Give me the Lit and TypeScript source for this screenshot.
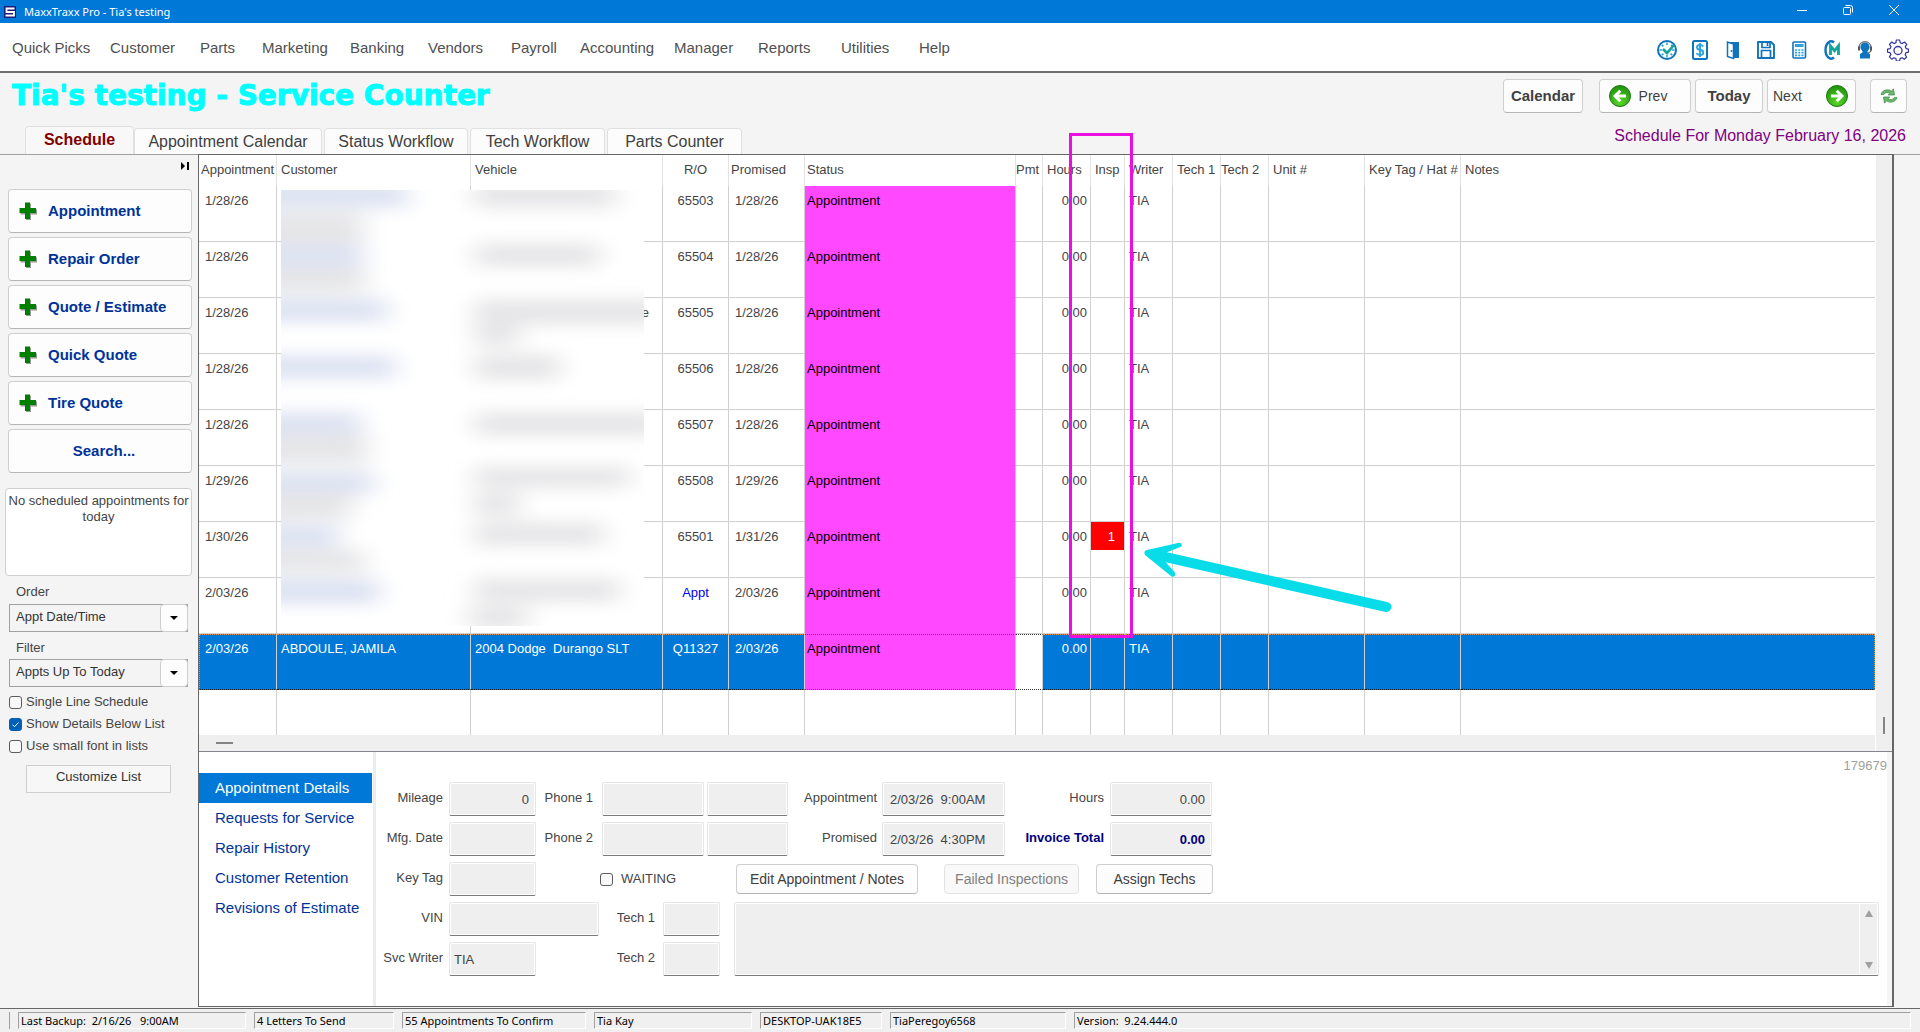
import { LitElement, html, css, svg, nothing } from "lit";
import { customElement } from "lit/decorators.js";
import { classMap } from "lit/directives/class-map.js";

interface Column { label: string; width: string; cls?: string; }
interface Row {
  appt: string; customer?: string; vehicle?: string; ro: string; promised: string;
  status: string; hours: string; insp?: string; writer: string; selected?: boolean; link?: boolean;
}

const COLUMNS: Column[] = [
  { label: "Appointment", width: "78px", cls: "tight" },
  { label: "Customer", width: "194px" },
  { label: "Vehicle", width: "192px" },
  { label: "R/O", width: "66px", cls: "center" },
  { label: "Promised", width: "76px", cls: "tight" },
  { label: "Status", width: "211px", cls: "tight" },
  { label: "Pmt", width: "27px", cls: "flush" },
  { label: "Hours", width: "48px" },
  { label: "Insp", width: "34px" },
  { label: "Writer", width: "48px" },
  { label: "Tech 1", width: "48px" },
  { label: "Tech 2", width: "48px", cls: "flush" },
  { label: "Unit #", width: "96px" },
  { label: "Key Tag / Hat #", width: "96px" },
  { label: "Notes", width: "auto" },
];

const row = (appt: string, ro: string, promised = appt, extra: Partial<Row> = {}): Row => ({
  appt, ro, promised, status: "Appointment", hours: "0.00", writer: "TIA", ...extra,
});

const ROWS: Row[] = [
  row("1/28/26", "65503"),
  row("1/28/26", "65504"),
  row("1/28/26", "65505", "1/28/26", { vehicle: "e" }),
  row("1/28/26", "65506"),
  row("1/28/26", "65507"),
  row("1/29/26", "65508"),
  row("1/30/26", "65501", "1/31/26", { insp: "1" }),
  row("2/03/26", "Appt", "2/03/26", { link: true }),
  row("2/03/26", "Q11327", "2/03/26", {
    customer: "ABDOULE, JAMILA", vehicle: "2004 Dodge  Durango SLT", selected: true,
  }),
];

const MENU = ["Quick Picks", "Customer", "Parts", "Marketing", "Banking", "Vendors", "Payroll", "Accounting", "Manager", "Reports", "Utilities", "Help"];
const TABS = ["Schedule", "Appointment Calendar", "Status Workflow", "Tech Workflow", "Parts Counter"];
const ACTIONS = ["Appointment", "Repair Order", "Quote / Estimate", "Quick Quote", "Tire Quote"];
const SECTIONS = ["Appointment Details", "Requests for Service", "Repair History", "Customer Retention", "Revisions of Estimate"];

/* x, y, width, height of the hidden names and vehicles */
const BLUE_BARS = [[0, -8, 126, 26], [0, 54, 82, 26], [0, 108, 106, 24], [0, 165, 114, 24], [0, 222, 80, 24], [0, 281, 92, 24], [0, 334, 58, 24], [0, 388, 98, 26]];
const GREY_BARS = [
  [0, 22, 82, 32], [0, 78, 84, 24], [0, 244, 86, 30], [0, 303, 70, 26], [0, 360, 84, 22],
  [194, -8, 140, 26], [194, 53, 124, 24], [194, 109, 190, 26], [194, 134, 44, 22], [194, 164, 84, 26],
  [194, 222, 190, 24], [194, 276, 154, 22], [194, 302, 44, 24], [194, 332, 128, 24], [194, 388, 144, 24], [188, 416, 58, 24],
];

const toolbarIcons = [
  { label: "Time clock", art: svg`<ellipse cx="11" cy="11" rx="9" ry="9" fill="#fff" stroke="#0f73bd" stroke-width="2"/><g stroke="#2ba3e0" stroke-width="1.5"><path d="M11 3.500v2.500M11 16v2.500M3.500 11H6M16 11h2.500M5.700 5.700l1.700 1.700M5.700 16.300l1.700-1.700M16.300 16.300l-1.700-1.700M16.300 5.700l-1.300 1.300"/></g><path d="M7 10l4 4 7-8" fill="none" stroke="#12a39a" stroke-width="2.600"/>` },
  { label: "Payments", art: svg`<rect x="4" y="2" width="14" height="18" rx="1.500" fill="#fff" stroke="#0f73bd" stroke-width="2"/><path d="M14.300 7.500c-1-1.200-2-1.500-3.300-1.500-4 0-4 4.300 0 4.800 4.300.6 4.300 5.200 0 5.200-1.500 0-2.700-.5-3.500-1.700M11 4v14" fill="none" stroke="#2ba3e0" stroke-width="1.900"/>` },
  { label: "Exit", art: svg`<path d="M5 3h12v16H9" fill="#0f73bd"/><path d="M5.500 3v14.500l6 2V5z" fill="#fff" stroke="#0f73bd" stroke-width="1.500"/><circle cx="9.500" cy="12" r="1" fill="#0f73bd"/>` },
  { label: "Save", art: svg`<path d="M3 3h13l3 3v13H3z" fill="#fff" stroke="#0f73bd" stroke-width="1.900" stroke-linejoin="round"/><path d="M7 3v5.500h8V3M12.500 3.500v3.500M6.500 19v-7.500h9V19" fill="none" stroke="#0f73bd" stroke-width="1.700"/>` },
  { label: "Calculator", art: svg`<rect x="5" y="3" width="12.500" height="16" rx="1" fill="#fff" stroke="#0f73bd" stroke-width="1.600"/><path d="M7 6.500h8.500" stroke="#2ba3e0" stroke-width="3"/><path d="M7 11h8.500M7 13.700h8.500M7 16.300h8.500" stroke="#2ba3e0" stroke-width="1.700" stroke-dasharray="2 1.250"/>` },
  { label: "CM", art: svg`<path d="M13 3.500C9.500.5 4.500 4 4.500 11s5 10.500 8.500 7.500" fill="none" stroke="#0f73bd" stroke-width="2.400"/><path d="M9.500 16V6.800l4 5 4-5V16" fill="none" stroke="#12a39a" stroke-width="2.800"/>` },
  { label: "Support", art: svg`<circle cx="11" cy="8" r="4.600" fill="#0f73bd"/><path d="M8.500 11h5v2.500l2.500 1.500v4.500H6V15l2.500-1.500z" fill="#0f73bd"/><path d="M5 11V8.500C5 .8 17 .8 17 8.500V11c0 2-1.500 2.500-3.500 2.500" fill="none" stroke="#777" stroke-width="1.300"/><path d="M5 7.500v4M17 7.500v4" stroke="#555" stroke-width="2"/>` },
  { label: "Settings", art: svg`<path d="M9.300 1h3.400l.5 2.700 2 .9 2.300-1.600 2.300 2.400-1.500 2.300.8 1.900 2.400.5v3l-2.500.6-.9 2 1.500 2.300-2.300 2.300-2.200-1.600-2 .9-.5 2.500H9.400l-.5-2.600-1.900-.8-2.300 1.500-2.300-2.300L3.900 15.600l-.8-1.900-2.600-.5v-3l2.700-.6.8-2-1.500-2.200 2.200-2.400L7 4.600l1.900-.8z" fill="#fff" stroke="#3434a4" stroke-width="1.200" stroke-linejoin="round"/><circle cx="11" cy="11.500" r="4" fill="none" stroke="#3434a4" stroke-width="1.300"/>` },
];

const roundArrow = (left: boolean) => html`<svg class="round" viewBox="0 0 22 22" aria-hidden="true">
  <defs><radialGradient id="g" cx="50%" cy="80%" r="80%"><stop offset="0" stop-color="#5ad626"/><stop offset="1" stop-color="#1f8f10"/></radialGradient></defs>
  <circle cx="11" cy="11" r="10.500" fill="url(#g)" stroke="#16780c"/>
  <path d="${left ? "M17 11H6.500M11.300 5.800L6 11l5.300 5.200" : "M5 11h10.500M10.700 5.800L16 11l-5.300 5.200"}" fill="none" stroke="#fff" stroke-width="2.900"/>
</svg>`;

@customElement("app-root")
export class AppRoot extends LitElement {
  static styles = css`
    :host { display: flex; flex-direction: column; min-height: 100vh; background: #f4f4f4; color: #444; font: 13px/16px "Liberation Sans", Arial, sans-serif; }
    *, *::before, *::after { box-sizing: border-box; }
    button, input, select, textarea { font: inherit; color: inherit; margin: 0; }
    a { text-decoration: none; color: inherit; }
    svg { display: block; flex: none; }

    .titlebar { display: flex; align-items: center; height: 23px; background: #0078d7; color: #fff; padding: 0 8px 0 4px; gap: 8px; font: 11px/16px "Noto Sans", "Open Sans", sans-serif; }
    .titlebar .name { flex: 1; padding-top: 1px; }
    .window { display: flex; gap: 10px; padding-bottom: 3px; }
    .window button { width: 36px; height: 20px; padding: 0; border: 0; background: none; display: grid; place-items: center; }

    .menubar { display: flex; justify-content: space-between; align-items: center; height: 50px; padding: 0 11px 0 12px; background: #fff; border-bottom: 2px solid #6e6e6e; }
    .menu { display: grid; grid-template-columns: 98px 90px 62px 88px 78px 83px 69px 94px 84px 83px 78px 60px; padding-top: 2px; font-size: 15px; line-height: 20px; color: #505050; }
    .tools { display: flex; gap: 11px; padding-top: 5px; }
    .tools button { width: 22px; height: 22px; padding: 0; border: 0; background: none; }
    .tools svg { width: 22px; height: 22px; }

    .head { display: flex; justify-content: space-between; padding: 6px 13px 0 12px; }
    h1 { margin: 0; font: 700 28px/34px "DejaVu Sans", "Liberation Sans", sans-serif; color: #00ffff; -webkit-text-stroke: 1px #00ffff; }
    .push { background: #fdfdfd; border: 1px solid #cfcfcf; border-bottom-color: #b5b5b5; border-radius: 4px; padding: 0; display: flex; align-items: center; justify-content: center; height: 34px; font-size: 14px; color: #404040; }
    .push.strong { font-weight: 700; font-size: 15px; }
    .nav { display: flex; gap: 4px; }
    .calendar { width: 80px; margin-right: 12px; }
    .prev { width: 92px; gap: 8px; padding-right: 14px; }
    .today { width: 68px; }
    .next { width: 89px; justify-content: space-between; padding: 0 7px 0 5px; }
    .refresh { width: 37px; margin-left: 10px; }
    .round { width: 22px; height: 22px; }

    .tabrow { display: flex; justify-content: space-between; align-items: flex-end; height: 41px; padding: 0 14px 0 25px; }
    .tabs { display: flex; align-items: flex-end; gap: 2px; }
    .tab { height: 26px; padding: 0; border: 1px solid #e0e0e0; border-bottom: 0; border-radius: 4px 4px 0 0; background: #fcfcfc; font-size: 16px; line-height: 24px; color: #404040; width: 135px; }
    .tab:nth-child(2) { width: 188px; margin-left: -2px; }
    .tab:nth-child(3) { width: 144px; }
    .tab.on { width: 109px; height: 28px; padding-bottom: 2px; font-weight: 700; color: #800000; background: #f8f8f8; }
    .date { font-size: 16px; line-height: 20px; color: #800080; padding-bottom: 8px; }

    .body { flex: 1; display: flex; padding-right: 26px; border-top: 1px solid #a0a0a0; }
    aside { width: 198px; flex: none; display: flex; flex-direction: column; padding: 7px 6px 0 8px; }
    .collapse { align-self: flex-end; width: 12px; height: 8px; margin: 0 0 19px; padding: 0; border: 0; background: none; }
    .actions { display: flex; flex-direction: column; gap: 4px; }
    .actions .push { height: 44px; font-weight: 700; font-size: 15px; color: #003399; justify-content: flex-start; padding-left: 10px; gap: 11px; }
    .actions .search { justify-content: center; padding-left: 8px; }
    .notice { height: 88px; margin: 15px 0 0 -3px; padding: 4px 0; background: #fff; border: 1px solid #cfcfcf; border-radius: 4px; text-align: center; }
    .picker { display: flex; flex-direction: column; gap: 4px; margin: 8px 4px 0 1px; }
    .picker label { padding-left: 7px; }
    .pick { display: flex; position: relative; }
    .pick select { appearance: none; flex: 1; height: 28px; padding: 0 32px 3px 6px; border: 1px solid #a0a0a0; border-radius: 0; background: #f4f4f4; color: #333; }
    .pick span { position: absolute; right: 0; top: 0; width: 28px; height: 28px; background: #fdfdfd; border: 1px solid #cfcfcf; border-radius: 4px; display: grid; place-items: center; pointer-events: none; }
    .picker + .picker { gap: 3px; margin-top: 8px; margin-bottom: 4px; }
    .check { display: flex; align-items: center; gap: 4px; height: 22px; padding-left: 1px; }
    .box { appearance: none; width: 13px; height: 13px; flex: none; border: 1px solid #5c5c5c; border-radius: 3px; background: #f8f8f8; }
    .box:checked { background: #005fb8 url('data:image/svg+xml,<svg xmlns="http://www.w3.org/2000/svg" viewBox="0 0 11 11"><path d="M2.500 5.700l2 2 4-4.200" fill="none" stroke="white"/></svg>'); border-color: #005fb8; }
    .customize { width: 145px; height: 28px; margin: 8px 0 0 18px; padding: 0 0 4px; border: 1px solid #cfcfcf; background: #f7f7f7; color: #333; }

    main { flex: 1; min-width: 0; display: flex; flex-direction: column; margin-top: -1px; background: #fff; border: 1px solid #666; border-right-width: 2px; }
    .list { position: relative; display: grid; grid-template-columns: 1fr 16px; border-bottom: 1px solid #85858f; }
    table { table-layout: fixed; width: 100%; border-collapse: separate; border-spacing: 0; border-right: 1px solid #fff; }
    th, td { padding: 0 0 0 4px; text-align: left; vertical-align: top; font-weight: 400; border-right: 1px solid #d0d0d0; overflow: hidden; white-space: pre; }
    th:last-child, td:last-child { border-right: 0; }
    th { height: 31px; padding-top: 7px; border-right-color: #e3e3e3; }
    td { height: 56px; padding-top: 7px; border-bottom: 1px solid #d0d0d0; }
    .tight { padding-left: 2px; }
    .flush { padding-left: 0; }
    .center { text-align: center; padding-left: 0; }
    .day { padding-left: 6px; }
    .num { text-align: right; padding-right: 3px; }
    .clip { text-align: right; padding-right: 13px; }
    .status { background: #ff48ff; color: #000; padding-left: 2px; border-bottom-color: #ff48ff; }
    .ro-link { color: #0000e6; }
    .insp { padding: 0; }
    .flag { height: 28px; padding: 7px 9px 0 0; background: #f00; color: #fff; text-align: right; }
    .selected td { background: #0078d7; color: #fff; border-top: 1px dotted #e88f4a; border-bottom: 1px dotted #102030; padding-top: 6px; }
    .selected td:first-child { border-left: 1px dotted #e88f4a; padding-left: 5px; }
    .selected td:last-child { border-right: 1px dotted #e88f4a; }
    .selected td.status { background: #ff48ff; color: #000; border-top-color: #207020; border-bottom-color: #207020; }
    .selected td.pmt { background: #fff; border-color: #333; border-right-color: #d0d0d0; }
    .filler td { height: 45px; border-bottom: 0; }
    .vscroll { background: #efefef; display: flex; justify-content: center; align-items: flex-end; grid-row: span 2; padding-bottom: 17px; }
    .vscroll i { width: 2px; height: 17px; background: #858585; }
    .hscroll { height: 16px; background: #efefef; display: flex; align-items: center; padding-left: 17px; border-right: 1px solid #fff; }
    .hscroll i { width: 17px; height: 2px; background: #858585; }
    .hidden { position: absolute; left: 82px; top: 35px; width: 363px; height: 436px; background: #fff; }
    .marker { position: absolute; left: 870px; top: -22px; width: 64px; height: 505px; border: 3px solid #eb0fe0; }
    .arrow { position: absolute; left: 944px; top: 385px; width: 250px; height: 74px; }

    .details { flex: 1; display: flex; border-right: 5px solid #f5f5f5; }
    .sections { width: 177px; flex: none; padding: 21px 1px 0 0; border-right: 3px solid #ececec; display: flex; flex-direction: column; }
    .sections a { height: 30px; padding-left: 16px; font-size: 15px; line-height: 30px; color: #003399; }
    .sections a.on { background: #0078d7; color: #fff; }
    .form { flex: 1; display: flex; flex-direction: column; gap: 6px; padding: 8px 8px 0 0; }
    .record { align-self: flex-end; color: #a0a0a0; margin: -2px -8px 2px 0; }
    .line { display: flex; height: 34px; }
    .line label { text-align: right; line-height: 32px; white-space: nowrap; }
    .field, textarea { border: 1px solid #e5e5e5; border-bottom-color: #7a7a7a; border-radius: 2px; background: #efefef; box-shadow: inset 0 0 0 1px #fff; padding: 1px 6px 0 4px; min-width: 0; outline: 0; }
    .field.end { text-align: right; }
    .field.when { padding-left: 7px; }
    .a { width: 67px; margin-right: 6px; }
    .b { width: 57px; margin-right: 9px; }
    .c { width: 89px; margin-right: 5px; }
    .d { width: 99px; margin-right: 6px; }
    .t { width: 56px; margin-right: 8px; }
    .w57 { width: 57px; }
    .w81 { width: 81px; margin-left: 3px; }
    .w87 { width: 87px; }
    .w102 { width: 102px; }
    .w123 { width: 123px; }
    .w150 { width: 150px; }
    .total { font-weight: 700; color: #000080; }
    .line .waiting { display: flex; align-items: center; gap: 8px; width: 136px; margin-left: 64px; line-height: 16px; }
    .line .push { height: 30px; margin-top: 2px; }
    .edit { width: 182px; margin-right: 26px; }
    .failed { width: 135px; margin-right: 17px; }
    .assign { width: 117px; }
    .push:disabled { color: #808080; border-color: #e3e3e3; background: #f9f9f9; }
    .lower { display: flex; gap: 14px; }
    .stack { display: flex; flex-direction: column; gap: 6px; }
    .stack .short .t { margin-left: 63px; }
    .notes { flex: 1; display: flex; position: relative; }
    textarea { flex: 1; resize: none; overflow: hidden; }
    .notes .bar { position: absolute; right: 2px; top: 2px; bottom: 2px; width: 18px; padding: 6px 0 5px; border-left: 1px solid #fff; display: flex; flex-direction: column; justify-content: space-between; align-items: center; }

    footer { display: flex; gap: 8px; height: 24px; margin-top: 1px; padding: 3px 9px 2px; border-top: 1px solid #666; background: #f0f0f0; font: 11px/16px "Noto Sans", "Open Sans", sans-serif; color: #000; }
    footer span { height: 17px; padding-left: 2px; border: 1px solid; border-color: #a0a0a0 #fff #fff #a0a0a0; white-space: pre; }
    footer .grip { width: 1px; padding: 0; border-width: 0 0 0 1px; }
  `;

  private field(id: string, label: string, lw: string, w: string, value = "", extra = "") {
    return html`<label class="${lw} ${extra.includes("total") ? "total" : ""}" for=${id}>${label}</label><input id=${id} class="field ${w} ${extra}" readonly .value=${value}>`;
  }

  private renderRow(r: Row) {
    return html`<tr class=${classMap({ selected: !!r.selected })}>
      <td class="day">${r.appt}</td><td>${r.customer ?? nothing}</td>
      <td class=${classMap({ clip: r.vehicle === "e" })}>${r.vehicle ?? nothing}</td>
      <td class=${classMap({ center: true, "ro-link": !!r.link })}>${r.ro}</td>
      <td class="day">${r.promised}</td><td class="status">${r.status}</td><td class="pmt"></td>
      <td class="num">${r.hours}</td>
      <td class="insp">${r.insp ? html`<div class="flag">${r.insp}</div>` : nothing}</td>
      <td>${r.writer}</td><td></td><td></td><td></td><td></td><td></td></tr>`;
  }

  private renderSidebar() {
    return html`<aside>
      <button class="collapse" aria-label="Collapse panel"><svg width="12" height="8"><path d="M1 0v8l4-4zM7 0h2v8H7z" fill="#000"/></svg></button>
      <div class="actions">
        ${ACTIONS.map((a) => html`<button class="push"><svg width="18" height="18"><path d="M7 1.500h5v6h6v5h-6v6H7v-6H1.500v-5H7z" fill="#999"/><path d="M6 .5h5v5.500h6v5h-6v6H6v-6H.5V6H6z" fill="#008000"/></svg>${a}</button>`)}
        <button class="push search">Search...</button>
      </div>
      <div class="notice">No scheduled appointments for today</div>
      ${[["order", "Order", "Appt Date/Time"], ["filter", "Filter", "Appts Up To Today"]].map(([id, l, v]) => html`<div class="picker"><label for=${id}>${l}</label>
        <div class="pick"><select id=${id}><option>${v}</option></select><span><svg width="8" height="4"><path d="M0 0h8L4 4z"/></svg></span></div></div>`)}
      <label class="check"><input class="box" type="checkbox">Single Line Schedule</label>
      <label class="check"><input class="box" type="checkbox" checked>Show Details Below List</label>
      <label class="check"><input class="box" type="checkbox">Use small font in lists</label>
      <button class="customize">Customize List</button>
    </aside>`;
  }

  private renderList() {
    return html`<div class="list">
      <table>
        <colgroup>${COLUMNS.map((c) => html`<col style="width:${c.width}">`)}</colgroup>
        <thead><tr>${COLUMNS.map((c) => html`<th class=${c.cls ?? ""}>${c.label}</th>`)}</tr></thead>
        <tbody>${ROWS.map((r) => this.renderRow(r))}<tr class="filler">${COLUMNS.map(() => html`<td></td>`)}</tr></tbody>
      </table>
      <div class="vscroll"><i></i></div>
      <div class="hscroll"><i></i></div>
      <svg class="hidden" viewBox="0 0 363 436" aria-hidden="true">
        <defs><filter id="soft" x="-20%" y="-20%" width="140%" height="140%"><feGaussianBlur stdDeviation="13 8"/></filter></defs>
        <g filter="url(#soft)">
          ${BLUE_BARS.map(([x, y, w, h]) => svg`<rect x=${x - 40} y=${y} width=${w + 40} height=${h} fill="#dde3f2"/>`)}
          ${GREY_BARS.map(([x, y, w, h]) => svg`<rect x=${x < 20 ? x - 40 : x} y=${y} width=${x < 20 ? w + 40 : w} height=${h} fill="#e6e6e8"/>`)}
        </g>
      </svg>
      <div class="marker"></div>
      <svg class="arrow" viewBox="430 180 750 222" aria-hidden="true"><path fill="#08dce8" d="M434 218Q434 211 442 210L538 188Q547 188 546 197Q545 200 540 202L502 217L1162 366Q1176 370 1176 382Q1172 396 1158 396L498 247L524 275Q529 282 525 288Q519 293 513 287L436 225Z"/></svg>
    </div>`;
  }

  private renderDetails() {
    return html`<section class="details">
      <nav class="sections">${SECTIONS.map((s, i) => html`<a href="#" class=${i === 0 ? "on" : ""}>${s}</a>`)}</nav>
      <div class="form">
        <div class="record">179679</div>
        <div class="line">
          ${this.field("mileage", "Mileage", "a", "w87", "0", "end")}${this.field("p1", "Phone 1", "b", "w102")}<input class="field w81" aria-label="Phone 1 note" readonly>
          ${this.field("ap", "Appointment", "c", "w123", "2/03/26  9:00AM", "when")}${this.field("hrs", "Hours", "d", "w102", "0.00", "end")}
        </div>
        <div class="line">
          ${this.field("mfg", "Mfg. Date", "a", "w87")}${this.field("p2", "Phone 2", "b", "w102")}<input class="field w81" aria-label="Phone 2 note" readonly>
          ${this.field("pr", "Promised", "c", "w123", "2/03/26  4:30PM", "when")}${this.field("inv", "Invoice Total", "d", "w102", "0.00", "end total")}
        </div>
        <div class="line">
          ${this.field("key", "Key Tag", "a", "w87")}
          <label class="waiting"><input class="box" type="checkbox">WAITING</label>
          <button class="push edit">Edit Appointment / Notes</button><button class="push failed" disabled>Failed Inspections</button><button class="push assign">Assign Techs</button>
        </div>
        <div class="lower">
          <div class="stack">
            <div class="line">${this.field("vin", "VIN", "a", "w150")}${this.field("t1", "Tech 1", "t", "w57")}</div>
            <div class="line short">${this.field("sw", "Svc Writer", "a", "w87", "TIA")}${this.field("t2", "Tech 2", "t", "w57")}</div>
          </div>
          <div class="notes"><textarea aria-label="Notes" readonly></textarea>
            <div class="bar"><svg width="8" height="7"><path d="M4 0l4 7H0z" fill="#a0a0a0"/></svg><svg width="8" height="7"><path d="M4 7l4-7H0z" fill="#a0a0a0"/></svg></div></div>
        </div>
      </div>
    </section>`;
  }

  render() {
    return html`
      <header class="titlebar">
        <svg width="12" height="12"><rect width="12" height="12" fill="#1c1c7c"/><path d="M10.500 2.500h-8v3.500h7.500v3.500h-8.500" fill="none" stroke="#fff" stroke-width="1.800"/></svg>
        <span class="name">MaxxTraxx Pro - Tia's testing</span>
        <div class="window">
          <button aria-label="Minimize"><svg width="10" height="10"><path d="M0 5.500h10" stroke="#fff"/></svg></button>
          <button aria-label="Restore"><svg width="10" height="10" fill="none" stroke="#fff"><rect x=".5" y="2.500" width="7" height="7" rx="1"/><path d="M2.500 .5h5q2 0 2 2v5"/></svg></button>
          <button aria-label="Close"><svg width="10" height="10"><path d="M0 0l10 10M10 0L0 10" stroke="#fff"/></svg></button>
        </div>
      </header>
      <div class="menubar">
        <nav class="menu">${MENU.map((m) => html`<a href="#">${m}</a>`)}</nav>
        <div class="tools">${toolbarIcons.map((i) => html`<button aria-label=${i.label}><svg viewBox="0 0 22 22">${i.art}</svg></button>`)}</div>
      </div>
      <div class="head">
        <h1>Tia's testing - Service Counter</h1>
        <div class="nav">
          <button class="push strong calendar">Calendar</button>
          <button class="push prev">${roundArrow(true)}Prev</button>
          <button class="push strong today">Today</button>
          <button class="push next">Next${roundArrow(false)}</button>
          <button class="push refresh" aria-label="Refresh"><svg width="18" height="16" viewBox="0 0 18 16"><path d="M1 6.500C2 2 8 .5 11.500 3.200L13.500.8l1 6.200H8.200l1.800-1.800C7.500 3.800 4.500 4.300 3.800 6.500z" fill="#6db56d" stroke="#3e8a45" stroke-width=".7"/><path d="M17 9.500c-1 4.500-7 6-10.500 3.300l-2 2.400-1-6.200h6.300L8 10.800c2.500 1.400 5.500.9 6.200-1.300z" fill="#6db56d" stroke="#3e8a45" stroke-width=".7"/></svg></button>
        </div>
      </div>
      <div class="tabrow">
        <div class="tabs" role="tablist">${TABS.map((t, i) => html`<button role="tab" aria-selected=${i === 0} class=${classMap({ tab: true, on: i === 0 })}>${t}</button>`)}</div>
        <div class="date">Schedule For Monday February 16, 2026</div>
      </div>
      <div class="body">${this.renderSidebar()}<main>${this.renderList()}${this.renderDetails()}</main></div>
      <footer>
        <span class="grip"></span>
        ${[["Last Backup:  2/16/26   9:00AM", 228], ["4 Letters To Send", 140], ["55 Appointments To Confirm", 184], ["Tia Kay", 158], ["DESKTOP-UAK18E5", 122], ["TiaPeregoy6568", 176]].map(([t, w]) => html`<span style="width:${w}px">${t}</span>`)}
        <span style="flex:1">Version:  9.24.444.0</span>
      </footer>`;
  }
}
